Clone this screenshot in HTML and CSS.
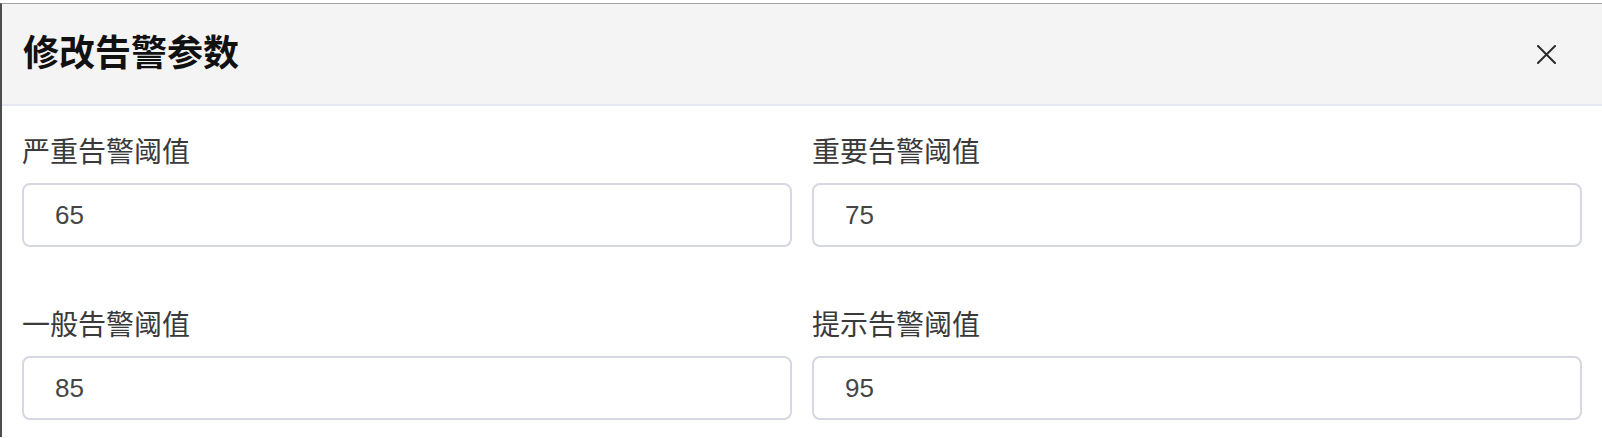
FILE: index.html
```html
<!DOCTYPE html>
<html lang="zh-CN">
<head>
<meta charset="utf-8">
<title>修改告警参数</title>
<link rel="stylesheet" href="styles.css">
</head>
<body>
<div class="dialog">
  <div class="header">
    <div class="title">修改告警参数</div>
    <button class="close" aria-label="关闭">
      <svg width="19" height="19" viewBox="0 0 19 19"><path d="M1 1 L18 18 M18 1 L1 18" stroke="#2b2b2b" stroke-width="2" fill="none" stroke-linecap="square"/></svg>
    </button>
  </div>
  <div class="body">
    <div class="field">
      <label class="label">严重告警阈值</label>
      <input class="input" type="text" value="65">
    </div>
    <div class="field">
      <label class="label">重要告警阈值</label>
      <input class="input" type="text" value="75">
    </div>
    <div class="field">
      <label class="label">一般告警阈值</label>
      <input class="input" type="text" value="85">
    </div>
    <div class="field">
      <label class="label">提示告警阈值</label>
      <input class="input" type="text" value="95">
    </div>
  </div>
</div>
</body>
</html>
```
FILE: styles.css
```css
html, body {
  margin: 0;
  padding: 0;
  background: #ffffff;
  font-family: "Liberation Sans", "Noto Sans CJK SC", sans-serif;
}

.dialog {
  margin-top: 3px;
  border-top: 1px solid #a3a3a3;
  border-left: 2px solid #4d4d4d;
  height: 434px;
  box-sizing: border-box;
  background: #ffffff;
}

.header {
  height: 102px;
  box-sizing: border-box;
  background: #f4f4f4;
  border-bottom: 2px solid #e6e8f1;
  display: flex;
  align-items: center;
  justify-content: space-between;
  padding: 0 46px 0 21px;
}

.title {
  font-size: 36px;
  font-weight: bold;
  color: #111111;
  line-height: 1;
}

.close {
  width: 19px;
  height: 19px;
  padding: 0;
  border: 0;
  background: transparent;
  display: block;
}

.close svg {
  display: block;
}

.body {
  display: grid;
  grid-template-columns: 1fr 1fr;
  column-gap: 20px;
  row-gap: 58px;
  padding: 26px 20px 0 20px;
}

.field {
  display: flex;
  flex-direction: column;
}

.label {
  font-size: 28px;
  line-height: 42px;
  color: #3a3a3a;
  margin-bottom: 9px;
}

.input {
  height: 64px;
  box-sizing: border-box;
  border: 2px solid #d6d8e1;
  border-radius: 8px;
  padding: 0 0 0 31px;
  font-family: "Liberation Sans", "Noto Sans CJK SC", sans-serif;
  font-size: 26px;
  color: #454545;
  background: #ffffff;
  outline: none;
  width: 100%;
}
```
